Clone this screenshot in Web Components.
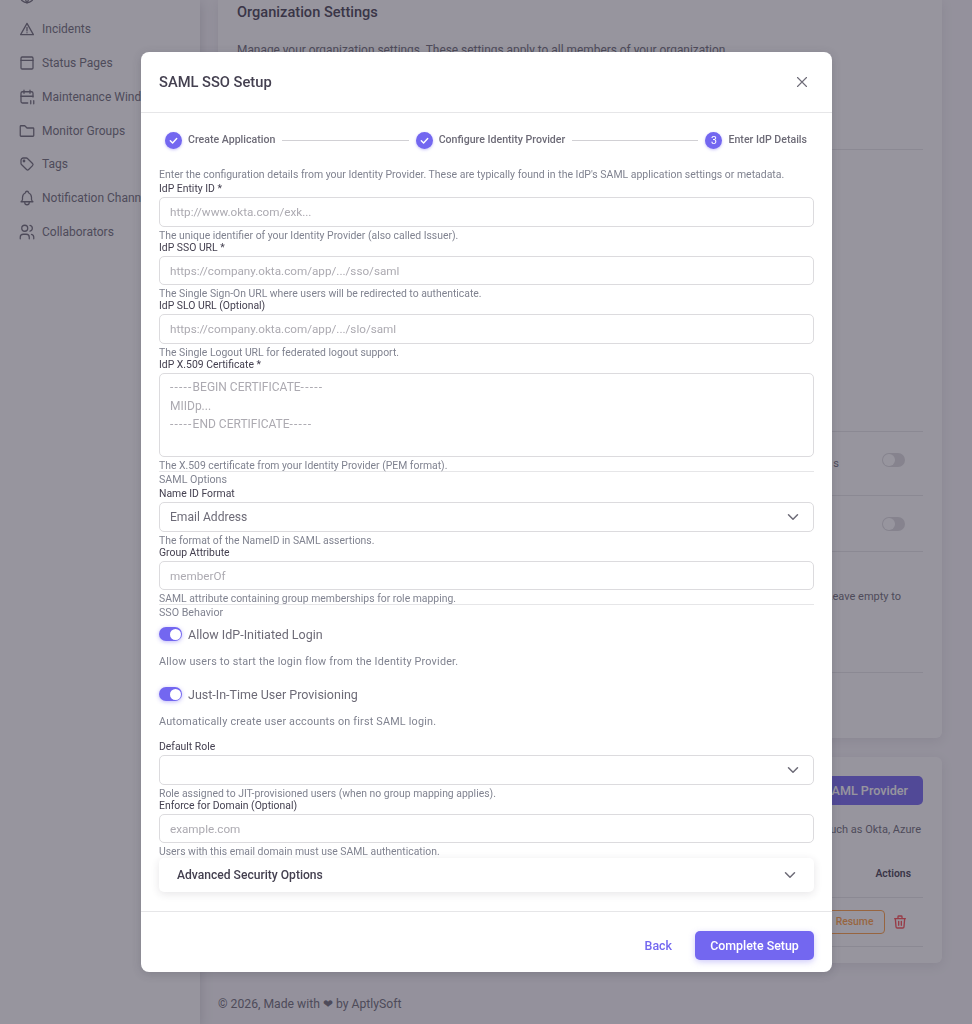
<!DOCTYPE html>
<html>
<head>
<meta charset="utf-8">
<title>SAML SSO Setup</title>
<style>
    html, body { margin: 0; height: 100%; }
    body { font-family: Roboto, "Liberation Sans", sans-serif; background: #f8f7fa; overflow: hidden; }
</style>
</head>
<body>

<app-page>
    <side-nav slot="nav"></side-nav>
    <org-settings slot="main"></org-settings>
</app-page>

<saml-modal title="SAML SSO Setup">
    <step-bar></step-bar>
    <p class="intro">Enter the configuration details from your Identity Provider. These are typically found in the IdP's SAML application settings or metadata.</p>

    <form-field label="IdP Entity ID *" placeholder="http://www.okta.com/exk..." hint="The unique identifier of your Identity Provider (also called Issuer)."></form-field>
    <form-field label="IdP SSO URL *" placeholder="https://company.okta.com/app/.../sso/saml" hint="The Single Sign-On URL where users will be redirected to authenticate."></form-field>
    <form-field label="IdP SLO URL (Optional)" placeholder="https://company.okta.com/app/.../slo/saml" hint="The Single Logout URL for federated logout support."></form-field>
    <form-field label="IdP X.509 Certificate *" type="textarea" placeholder="-----BEGIN CERTIFICATE-----&#10;MIIDp...&#10;-----END CERTIFICATE-----" hint="The X.509 certificate from your Identity Provider (PEM format)."></form-field>

    <section-title>SAML Options</section-title>
    <form-field label="Name ID Format" type="select" value="Email Address" hint="The format of the NameID in SAML assertions."></form-field>
    <form-field label="Group Attribute" placeholder="memberOf" hint="SAML attribute containing group memberships for role mapping."></form-field>

    <section-title>SSO Behavior</section-title>
    <toggle-field label="Allow IdP-Initiated Login" hint="Allow users to start the login flow from the Identity Provider."></toggle-field>
    <toggle-field label="Just-In-Time User Provisioning" hint="Automatically create user accounts on first SAML login."></toggle-field>

    <form-field label="Default Role" type="select" value="" hint="Role assigned to JIT-provisioned users (when no group mapping applies)." style="margin-top:12.5px"></form-field>
    <form-field label="Enforce for Domain (Optional)" placeholder="example.com" hint="Users with this email domain must use SAML authentication."></form-field>
    <accordion-row>Advanced Security Options</accordion-row>
</saml-modal>

<script>
const CHEVRON = '<svg width="18" height="18" viewBox="0 0 24 24" fill="none" stroke="currentColor" stroke-width="2" stroke-linecap="round" stroke-linejoin="round"><path d="M6 9l6 6 6-6"/></svg>';

function shadow(el, html) {
    el.attachShadow({ mode: 'open' });
    el.shadowRoot.innerHTML = html;
}

// page behind the dialog
class AppPage extends HTMLElement {
    connectedCallback() {
        shadow(this, `
            <style>
                :host { display: flex; height: 1024px; overflow: hidden; color: #6d6b77; }
                .nav { flex: 0 0 200px; background: #fff; box-shadow: 0 3px 12px rgba(47,43,61,.2); position: relative; }
                .main { flex: 1; min-width: 0; }
            </style>
            <div class="nav"><slot name="nav"></slot></div>
            <div class="main"><slot name="main"></slot></div>
        `);
    }
}

class SideNav extends HTMLElement {
    connectedCallback() {
        const ico = {
            '': '<circle cx="12" cy="12" r="9"/><path d="M3 12h18M12 3c3 3 3 15 0 18M12 3c-3 3-3 15 0 18"/>',
            'Incidents': '<path d="M12 4.5 3.5 19.5h17z"/><path d="M12 10v4.5M12 17v.1"/>',
            'Status Pages': '<rect x="4" y="4" width="16" height="16" rx="1.5"/><path d="M4 8.5h16"/>',
            'Maintenance Windows': '<path d="M13 20H6a2 2 0 0 1-2-2V7a2 2 0 0 1 2-2h12a2 2 0 0 1 2 2v5"/><path d="M16 3v4M8 3v4M4 11h16M17 17v4M21 17v4"/>',
            'Monitor Groups': '<path d="M4 5h5l3 3h8a1 1 0 0 1 1 1v9a1 1 0 0 1-1 1H4a1 1 0 0 1-1-1V6a1 1 0 0 1 1-1z"/>',
            'Tags': '<circle cx="8" cy="8" r="1"/><path d="M4 7v4.2a2 2 0 0 0 .6 1.4l6.8 6.8a2 2 0 0 0 2.8 0l5.2-5.2a2 2 0 0 0 0-2.8l-6.8-6.8A2 2 0 0 0 11.2 4H7a3 3 0 0 0-3 3z"/>',
            'Notification Channels': '<path d="M10 5a2 2 0 1 1 4 0 7 7 0 0 1 4 6v3a4 4 0 0 0 2 3H4a4 4 0 0 0 2-3v-3a7 7 0 0 1 4-6"/><path d="M9 17v1a3 3 0 0 0 6 0v-1"/>',
            'Collaborators': '<circle cx="9" cy="7" r="4"/><path d="M3 21v-2a4 4 0 0 1 4-4h4a4 4 0 0 1 4 4v2M16 3.1a4 4 0 0 1 0 7.8M21 21v-2a4 4 0 0 0-3-3.9"/>'
        };
        const rows = Object.keys(ico).map(name => `
            <li><svg width="18" height="18" viewBox="0 0 24 24" fill="none" stroke="currentColor" stroke-width="1.7" stroke-linecap="round" stroke-linejoin="round">${ico[name]}</svg><span>${name}</span></li>
        `).join('');
        shadow(this, `
            <style>
                :host { display: block; font-size: 12px; color: #6d6b77; }
                ul { list-style: none; margin: -21.4px 0 0; padding: 0 0 0 18px; }
                li { display: flex; align-items: center; gap: 6px; height: 33.8px; white-space: nowrap; }
                svg { flex: none; }
            </style>
            <ul>${rows}</ul>
        `);
    }
}

class OrgSettings extends HTMLElement {
    connectedCallback() {
        shadow(this, `
            <style>
                :host { display: flex; flex-direction: column; height: 1024px; padding: 0 30px 0 18px; box-sizing: border-box; font-size: 11px; }
                .card { background: #fff; border-radius: 6px; box-shadow: 0 3px 12px rgba(47,43,61,.1); }
                .top { height: 738px; padding: 0 19px 0 19px; box-sizing: border-box; border-radius: 0 0 6px 6px; }
                h2 { margin: 0; padding-top: 3px; font-size: 14.6px; line-height: 18px; font-weight: 500; color: #444050; }
                .lead { margin: 20px 0 0; line-height: 18px; white-space: nowrap; font-size: 11.9px; }
                .rule { height: 1px; background: #e6e6e8; }
                .r1 { margin-top: 90px; }
                .gap { height: 281px; }
                .row { display: flex; justify-content: flex-end; align-items: center; box-sizing: border-box; border-bottom: 1px solid #e6e6e8; padding-right: 18px; }
                .sw { width: 23px; height: 14px; border-radius: 7px; background: #dcdbde; position: relative; }
                .sw::before { content: ""; position: absolute; left: 1px; top: 1px; width: 12px; height: 12px; border-radius: 50%; background: #fff; }
                .tail { margin: 6px 43px 0 0; }
                .hold { height: 121px; display: flex; justify-content: flex-end; padding: 38px 22px 0 0; box-sizing: border-box; border-bottom: 1px solid #e6e6e8; }
                .bottom { margin-top: 19px; height: 206px; padding: 19px 19px 0; box-sizing: border-box; }
                .btn { margin-left: auto; width: 110px; height: 29px; background: #7367f0; color: #fff; border-radius: 5px; font-weight: 500; display: flex; align-items: center; box-sizing: border-box; justify-content: flex-end; padding-right: 15px; font-size: 12.6px; }
                .note { text-align: right; margin-top: 16px; line-height: 18px; padding-right: 2px; }
                .act { text-align: right; margin-top: 26px; font-weight: 600; padding-right: 12px; line-height: 18px; padding-bottom: 14px; border-bottom: 1px solid #e6e6e8; color: #444050; font-size: 10.4px; }
                .res { display: flex; justify-content: flex-end; align-items: center; gap: 7px; height: 48px; border-bottom: 1px solid #e6e6e8; padding-right: 15px; }
                .res b { border: 1px solid #ff9f43; color: #ff9f43; font-weight: 500; border-radius: 4px; padding: 0 10.5px 0 40px; line-height: 22px; font-size: 10.4px; }
                .foot { margin-top: 34px; font-size: 12.2px; }
                svg { display: block; color: #ff4c51; }
            </style>
            <div class="card top">
                <h2>Organization Settings</h2>
                <p class="lead">Manage your organization settings. These settings apply to all members of your organization.</p>
                <div class="rule r1"></div>
                <div class="gap"></div>
                <div class="row" style="height:65px;border-top:1px solid #e6e6e8;padding-bottom:7px"><span class="tail">s</span><span class="sw"></span></div>
                <div class="row" style="height:56px"><span class="sw"></span></div>
                <div class="hold"><span>Leave empty to</span></div>
            </div>
            <div class="card bottom">
                <div class="btn">SAML Provider</div>
                <div class="note">such as Okta, Azure</div>
                <div class="act">Actions</div>
                <div class="res"><b>Resume</b>
                    <svg width="16" height="16" viewBox="0 0 24 24" fill="none" stroke="currentColor" stroke-width="2" stroke-linecap="round" stroke-linejoin="round"><path d="M4 7h16M10 11v6M14 11v6M5 7l1 12a2 2 0 0 0 2 2h8a2 2 0 0 0 2-2l1-12M9 7V4a1 1 0 0 1 1-1h4a1 1 0 0 1 1 1v3"/></svg>
                </div>
            </div>
            <div class="foot">© 2026, Made with ❤ by AptlySoft</div>
        `);
    }
}

// dialog
class SamlModal extends HTMLElement {
    connectedCallback() {
        shadow(this, `
            <style>
                :host { position: fixed; inset: 0; display: block; background: rgba(47,43,61,.5); font-family: Roboto, "Liberation Sans", sans-serif; }
                .dialog { position: absolute; left: 141px; top: 52px; width: 691px; height: 920px; background: #fff; border-radius: 8px; display: flex; flex-direction: column; box-shadow: 0 2px 10px rgba(47,43,61,.2); }
                header { flex: none; height: 61px; box-sizing: border-box; display: flex; align-items: center; justify-content: space-between; padding: 0 21px 1px 18px; border-bottom: 1px solid #e6e6e8; }
                h1 { margin: 0; font-size: 14.7px; font-weight: 500; color: #444050; }
                .x { display: block; color: #6d6b77; }
                main { flex: 1; min-height: 0; padding: 0 18px; }
                footer { flex: none; height: 61px; box-sizing: border-box; border-top: 1px solid #e6e6e8; display: flex; justify-content: flex-end; align-items: flex-start; gap: 23px; padding: 19px 18px 0; }
                .back { color: #7367f0; font-size: 12.4px; font-weight: 500; line-height: 29px; }
                .go { background: #7367f0; color: #fff; font-size: 12.4px; font-weight: 500; height: 29px; width: 119px; justify-content: center; display: flex; align-items: center; border-radius: 5px; box-shadow: 0 2px 6px rgba(115,103,240,.35); }
                ::slotted(p.intro) { margin: 0; font-size: 10.47px; line-height: 14px; color: #808390; white-space: nowrap; }
            </style>
            <div class="dialog">
                <header>
                    <h1>${this.getAttribute('title')}</h1>
                    <svg class="x" width="18" height="18" viewBox="0 0 24 24" fill="none" stroke="currentColor" stroke-width="1.5" stroke-linecap="round"><path d="M6 6l12 12M18 6 6 18"/></svg>
                </header>
                <main><slot></slot></main>
                <footer><span class="back">Back</span><span class="go">Complete Setup</span></footer>
            </div>
        `);
    }
}

class StepBar extends HTMLElement {
    connectedCallback() {
        const tick = '<span class="dot"><svg width="11" height="11" viewBox="0 0 24 24" fill="none" stroke="#fff" stroke-width="3" stroke-linecap="round" stroke-linejoin="round"><path d="M5 12.5l5 5 9-10"/></svg></span>';
        shadow(this, `
            <style>
                :host { display: flex; align-items: center; height: 55px; padding: 0 7px 1px 6px; box-sizing: border-box; font-size: 10.6px; font-weight: 500; color: #6d6b77; white-space: nowrap; }
                .step { display: flex; align-items: center; gap: 6px; }
                .step span + * { margin: 0; }
                .dot { width: 17px; height: 17px; border-radius: 50%; background: #7367f0; color: #fff; display: flex; align-items: center; justify-content: center; box-shadow: 0 1px 3px rgba(115,103,240,.4); font-weight: 400; }
                .step em { font-style: normal; margin-top: -2px; }
                .line { flex: 1; height: 1px; background: #d1d0d4; margin: 1px 7px 0; }
            </style>
            <div class="step">${tick}<em>Create Application</em></div>
            <div class="line"></div>
            <div class="step">${tick}<em>Configure Identity Provider</em></div>
            <div class="line"></div>
            <div class="step"><span class="dot">3</span><em>Enter IdP Details</em></div>
        `);
    }
}

class FormField extends HTMLElement {
    connectedCallback() {
        const type = this.getAttribute('type') || 'text';
        const value = this.getAttribute('value');
        const ph = this.getAttribute('placeholder') || '';
        let control;
        if (type === 'textarea') {
            // the hyphens run wider in the reference font
            const lines = ph.split('\n').map(l => `<div>${l.replace(/-{5}/g, '<i>$&</i>')}</div>`);
            control = `<div class="box area">${lines.join('')}</div>`;
        } else if (type === 'select') {
            control = `<div class="box sel"><span>${value}</span>${CHEVRON}</div>`;
        } else {
            control = `<div class="box ph">${ph}</div>`;
        }
        shadow(this, `
            <style>
                :host { display: block; font-size: 10.4px; }
                label { display: block; line-height: 12px; padding-top: 1px; color: #444050; margin-bottom: 2px; }
                .box { box-sizing: border-box; height: 29.5px; border: 1px solid #dcdbde; border-radius: 5px; padding: 1px 11px 0 10px; display: flex; align-items: center; font-size: 11.7px; color: #acaab1; }
                .area { height: 84.5px; flex-direction: column; align-items: flex-start; padding-top: 4.5px; line-height: 18.5px; font-size: 12px; }
                .area i { font-style: normal; letter-spacing: 1.2px; }
                .sel { color: #6d6b77; justify-content: space-between; font-size: 12.1px; padding-top: 1px; padding-right: 11px; }
                .sel svg { color: #6d6b77; flex: none; margin-top: -1px; }
                .hint { line-height: 11px; color: #808390; margin-top: 3px; white-space: nowrap; }
            </style>
            <label>${this.getAttribute('label')}</label>
            ${control}
            <div class="hint">${this.getAttribute('hint')}</div>
        `);
    }
}

class SectionTitle extends HTMLElement {
    connectedCallback() {
        shadow(this, `
            <style>
                :host { display: block; border-top: 1px solid #e6e6e8; padding-top: 2px; margin-bottom: 1px; font-size: 10.7px; line-height: 12px; color: #808390; }
            </style>
            <slot></slot>
        `);
    }
}

class ToggleField extends HTMLElement {
    connectedCallback() {
        shadow(this, `
            <style>
                :host { display: block; margin-bottom: 18.5px; }
                :host(:last-of-type) { margin-bottom: 0; }
                .head { display: flex; align-items: center; gap: 6px; height: 16px; margin-top: 7px; font-size: 12.5px; color: #6d6b77; }
                .sw { width: 23px; height: 14px; border-radius: 7px; background: #7367f0; position: relative; box-shadow: 0 1px 4px rgba(115,103,240,.45); flex: none; }
                .sw::after { content: ""; position: absolute; right: 1.5px; top: 1.5px; width: 11px; height: 11px; border-radius: 50%; background: #fff; }
                .hint { margin-top: 12.5px; line-height: 13px; font-size: 10.8px; color: #808390; letter-spacing: .2px; }
            </style>
            <div class="head"><span class="sw"></span>${this.getAttribute('label')}</div>
            <div class="hint">${this.getAttribute('hint')}</div>
        `);
    }
}

class AccordionRow extends HTMLElement {
    connectedCallback() {
        shadow(this, `
            <style>
                :host { display: flex; align-items: center; justify-content: space-between; height: 34px; margin-top: 1px; padding: 0 15px 0 18px; border-radius: 5px; font-size: 12.1px; font-weight: 500; color: #444050; box-shadow: 0 2px 8px rgba(47,43,61,.12); }
                svg { display: block; color: #6d6b77; }
            </style>
            <slot></slot>${CHEVRON}
        `);
    }
}

customElements.define('app-page', AppPage);
customElements.define('side-nav', SideNav);
customElements.define('org-settings', OrgSettings);
customElements.define('saml-modal', SamlModal);
customElements.define('step-bar', StepBar);
customElements.define('form-field', FormField);
customElements.define('section-title', SectionTitle);
customElements.define('toggle-field', ToggleField);
customElements.define('accordion-row', AccordionRow);
</script>
</body>
</html>
